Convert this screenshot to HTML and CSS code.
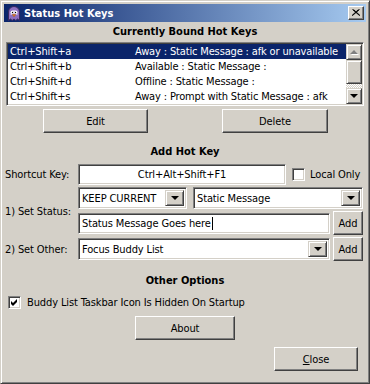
FILE: index.html
```html
<!DOCTYPE html>
<html>
<head>
<meta charset="utf-8">
<link rel="stylesheet" href="styles.css">
</head>
<body>
<div class="window">
  <div class="titlebar">
    <svg class="appicon" width="16" height="16" viewBox="0 0 16 16">
      <path d="M2.5 15.5 V7 a5.5 5.5 0 0 1 11 0 V15.5 l-2 -1.5 -1.7 1.5 -1.8 -1.5 -1.8 1.5 -1.7 -1.5 z" fill="#8e70c0" stroke="#3a2860" stroke-width="1"/>
      <path d="M4.5 8 a3.5 3 0 0 1 7 0 v2 h-7z" fill="#c9b8e6"/>
      <circle cx="6.2" cy="7.3" r="1.5" fill="#fff"/>
      <circle cx="9.8" cy="7.3" r="1.5" fill="#fff"/>
      <circle cx="6.5" cy="7.5" r="0.7" fill="#000"/>
      <circle cx="9.5" cy="7.5" r="0.7" fill="#000"/>
      <path d="M6.3 9.5 h3.4 l-1.7 2.2z" fill="#f08a1c" stroke="#a04800" stroke-width="0.5"/>
    </svg>
    <span class="title">Status Hot Keys</span>
    <div class="xbtn">
      <svg width="8" height="7" viewBox="0 0 8 7"><path d="M0.5 0.5 L7.5 6.5 M1.5 0.5 L8 6.5 M7.5 0.5 L0.5 6.5 M6.5 0.5 L0 6.5" stroke="#000" stroke-width="1" fill="none"/></svg>
    </div>
  </div>
  <div class="content">
    <div class="heading h-first">Currently Bound Hot Keys</div>
    <div class="listbox">
      <div class="rows">
        <div class="row sel"><span class="key">Ctrl+Shift+a</span><span class="act">Away : Static Message : afk or unavailable</span></div>
        <div class="row"><span class="key">Ctrl+Shift+b</span><span class="act">Available : Static Message :</span></div>
        <div class="row"><span class="key">Ctrl+Shift+d</span><span class="act">Offline : Static Message :</span></div>
        <div class="row"><span class="key">Ctrl+Shift+s</span><span class="act">Away : Prompt with Static Message : afk</span></div>
      </div>
      <div class="vscroll">
        <div class="sbtn"><span class="arrow-up"></span></div>
        <div class="thumb"></div>
        <div class="track"></div>
        <div class="sbtn"><span class="arrow-down"></span></div>
      </div>
    </div>
    <div class="btnrow">
      <div class="btn btn-edit">Edit</div>
      <div class="btn btn-delete">Delete</div>
    </div>
    <div class="heading h-add">Add Hot Key</div>
    <div class="form">
      <div class="label l-short">Shortcut Key:</div>
      <div class="ctrl">
        <div class="field f-short">Ctrl+Alt+Shift+F1</div>
        <div class="check c-local"></div>
        <span class="check-label">Local Only</span>
      </div>
      <div class="label l-status">1) Set Status:</div>
      <div class="ctrl">
        <div class="combo c-keep"><span class="combo-text">KEEP CURRENT</span><span class="dd"><span class="arrow-down"></span></span></div>
        <div class="combo c-static"><span class="combo-text">Static Message</span><span class="dd"><span class="arrow-down"></span></span></div>
      </div>
      <div class="ctrl">
        <div class="field f-msg">Status Message Goes here<span class="caret"></span></div>
        <div class="btn btn-add">Add</div>
      </div>
      <div class="label">2) Set Other:</div>
      <div class="ctrl">
        <div class="combo c-other"><span class="combo-text">Focus Buddy List</span><span class="dd"><span class="arrow-down"></span></span></div>
        <div class="btn btn-add">Add</div>
      </div>
    </div>
    <div class="heading h-other">Other Options</div>
    <div class="checkrow">
      <div class="check checked">
        <svg width="7" height="7" viewBox="0 0 7 7"><path d="M0 2 L2 4 L6 0 V3 L2 7 L0 5z" fill="#000"/></svg>
      </div>
      <span class="check-label">Buddy List Taskbar Icon Is Hidden On Startup</span>
    </div>
    <div class="btn btn-about">About</div>
    <div class="btn btn-close"><u>C</u>lose</div>
  </div>
</div>
</body>
</html>
```

FILE: styles.css
```css
* { box-sizing: border-box; }
html, body { margin: 0; padding: 0; }
body {
  width: 370px;
  height: 384px;
  overflow: hidden;
  background: #d4d0c8;
  font-family: "DejaVu Sans Condensed", "Liberation Sans", Arial, sans-serif;
  font-size: 11px;
  letter-spacing: -0.12px;
  color: #000;
}
.window {
  width: 370px;
  height: 384px;
  background: #d4d0c8;
  border: 1px solid;
  border-color: #d4d0c8 #404040 #404040 #d4d0c8;
  box-shadow: inset 1px 1px #fff, inset -1px -1px #808080;
  padding: 3px;
  display: flex;
  flex-direction: column;
}
.titlebar {
  height: 18px;
  flex: none;
  display: flex;
  align-items: center;
  padding: 0 2px 0 2px;
  background: linear-gradient(to right, #0a246a, #a6caf0);
}
.appicon { flex: none; margin-right: 2px; }
.title {
  flex: 1;
  color: #fff;
  font-weight: bold;
  font-size: 11px;
  letter-spacing: 0;
}
.xbtn {
  width: 16px;
  height: 14px;
  flex: none;
  background: #d4d0c8;
  border: 1px solid;
  border-color: #fff #404040 #404040 #fff;
  box-shadow: inset -1px -1px #808080;
  display: flex;
  align-items: center;
  justify-content: center;
  padding-bottom: 1px;
}
.content {
  flex: 1;
  display: flex;
  flex-direction: column;
}
.heading {
  font-weight: bold;
  text-align: center;
  height: 14px;
  line-height: 14px;
  letter-spacing: 0;
}
.h-first { margin-top: 3px; }
.h-add { margin-top: 12px; }
.h-other { margin-top: 13px; }

.listbox {
  margin: 3px 2px 0 2px;
  height: 64px;
  display: flex;
  border: 1px solid;
  border-color: #808080 #fff #fff #808080;
  box-shadow: inset 1px 1px #404040, inset -1px -1px #d4d0c8;
  padding: 1px;
  background: #fff;
}
.rows { flex: 1; background: #fff; }
.row {
  height: 15px;
  line-height: 15px;
  display: flex;
  padding-left: 2px;
  white-space: nowrap;
}
.row.sel { background: #0a246a; color: #fff; }
.key { width: 125px; flex: none; }
.act { letter-spacing: -0.15px; }
.vscroll {
  width: 16px;
  flex: none;
  display: flex;
  flex-direction: column;
}
.sbtn, .thumb {
  background: #d4d0c8;
  border: 1px solid;
  border-color: #d4d0c8 #404040 #404040 #d4d0c8;
  box-shadow: inset 1px 1px #fff, inset -1px -1px #808080;
}
.sbtn {
  height: 16px;
  flex: none;
  display: flex;
  align-items: center;
  justify-content: center;
}
.thumb { height: 24px; flex: none; }
.track {
  flex: 1;
  background-color: #fff;
  background-image: repeating-conic-gradient(#d4d0c8 0 25%, #fff 0 50%);
  background-size: 2px 2px;
}
.arrow-up {
  width: 0; height: 0;
  border-left: 4px solid transparent;
  border-right: 4px solid transparent;
  border-bottom: 4px solid #808080;
  filter: drop-shadow(1px 1px 0 #fff);
}
.arrow-down {
  width: 0; height: 0;
  border-left: 4px solid transparent;
  border-right: 4px solid transparent;
  border-top: 4px solid #000;
}

.btn {
  background: #d4d0c8;
  border: 1px solid;
  border-color: #fff #404040 #404040 #fff;
  box-shadow: inset -1px -1px #808080;
  display: flex;
  align-items: center;
  justify-content: center;
  height: 24px;
  flex: none;
  white-space: nowrap;
}
.btnrow {
  margin-top: 3px;
  display: flex;
  gap: 74px;
  padding-left: 39px;
}
.btn-edit { width: 105px; }
.btn-delete { width: 106px; }

.form {
  margin-top: 5px;
  padding-left: 1px;
  display: grid;
  grid-template-columns: 73px auto;
  grid-template-rows: 21px 22px 24px 24px;
  row-gap: 2px;
}
.label { align-self: center; white-space: nowrap; }
.l-status { grid-row: span 2; }
.ctrl { display: flex; align-items: center; }
.field, .combo {
  background: #fff;
  border: 1px solid;
  border-color: #808080 #fff #fff #808080;
  box-shadow: inset 1px 1px #404040, inset -1px -1px #d4d0c8;
  flex: none;
}
.field {
  height: 21px;
  line-height: 19px;
  padding-left: 3px;
  white-space: nowrap;
  display: flex;
  align-items: center;
}
.f-short { width: 208px; justify-content: center; padding-left: 0; }
.f-msg { width: 252px; }
.caret {
  display: inline-block;
  width: 1px;
  height: 13px;
  background: #000;
  margin-left: 1px;
}
.check {
  width: 13px;
  height: 13px;
  flex: none;
  background: #fff;
  border: 1px solid;
  border-color: #808080 #fff #fff #808080;
  box-shadow: inset 1px 1px #404040, inset -1px -1px #d4d0c8;
  display: flex;
  align-items: center;
  justify-content: center;
}
.c-local { margin-left: 6px; }
.check-label { margin-left: 5px; white-space: nowrap; }

.combo {
  height: 22px;
  display: flex;
  align-items: stretch;
  padding: 2px;
}
.combo-text {
  flex: 1;
  display: flex;
  align-items: center;
  padding-left: 1px;
  white-space: nowrap;
  overflow: hidden;
}
.dd {
  width: 19px;
  flex: none;
  background: #d4d0c8;
  border: 1px solid;
  border-color: #d4d0c8 #404040 #404040 #d4d0c8;
  box-shadow: inset 1px 1px #fff, inset -1px -1px #808080;
  display: flex;
  align-items: center;
  justify-content: center;
}
.c-keep { width: 109px; }
.c-static { width: 170px; margin-left: 6px; }
.c-other { width: 252px; }
.btn-add { width: 30px; margin-left: 3px; }

.checkrow {
  margin-top: 7px;
  height: 14px;
  display: flex;
  align-items: center;
  padding-left: 4px;
}
.checkrow .check-label { margin-left: 6px; }
.btn-about {
  margin-top: 7px;
  width: 100px;
  align-self: center;
}
.btn-close {
  margin-top: 7px;
  width: 84px;
  align-self: flex-end;
  margin-right: 8px;
}
```
